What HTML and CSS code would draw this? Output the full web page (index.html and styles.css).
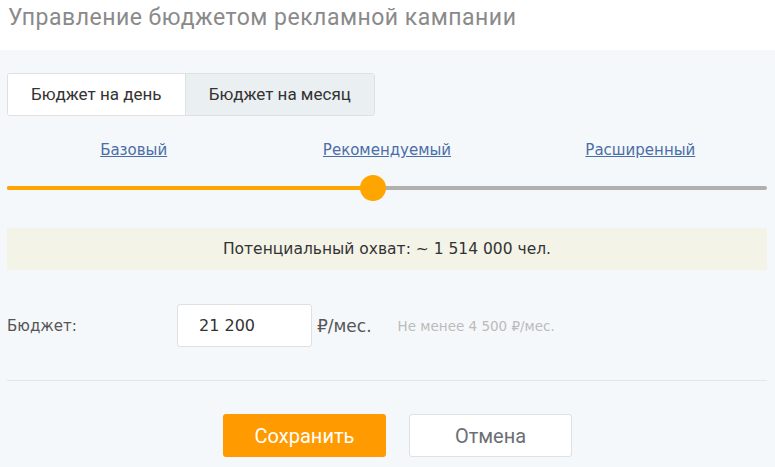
FILE: index.html
```html
<!DOCTYPE html>
<html lang="ru">
<head>
    <meta charset="UTF-8">
    <title>Управление бюджетом рекламной кампании</title>
    <link rel="stylesheet" href="styles.css">
</head>
<body>
    <div class="modal-head">Управление бюджетом рекламной кампании</div>

    <div class="modal-body">
        <div class="period-tabs">
            <div class="period-tab active">Бюджет на день</div>
            <div class="period-tab">Бюджет на месяц</div>
        </div>

        <div class="levels">
            <a href="#" class="level">Базовый</a>
            <a href="#" class="level">Рекомендуемый</a>
            <a href="#" class="level">Расширенный</a>
        </div>

        <div class="slider">
            <div class="slider-track"></div>
            <div class="slider-fill" style="width: 48.2%"></div>
            <div class="slider-thumb" style="left: 48.2%"></div>
        </div>

        <div class="reach">Потенциальный охват: ~ 1 514 000 чел.</div>

        <div class="budget-row">
            <label class="budget-label" for="budget">Бюджет:</label>
            <input class="budget-input" id="budget" type="text" value="21 200">
            <span class="budget-unit">₽/мес.</span>
            <span class="budget-hint">Не менее 4 500 ₽/мес.</span>
        </div>

        <div class="divider"></div>

        <div class="actions">
            <button class="btn btn-save">Сохранить</button>
            <button class="btn btn-cancel">Отмена</button>
        </div>
    </div>
</body>
</html>
```

FILE: styles.css
```css
body {
    margin: 0;
    padding: 0;
    background-color: #f5f8fa;
    font-family: Roboto, "Liberation Sans", Arial, sans-serif;
    overflow: hidden;
}

.modal-head {
    height: 50px;
    box-sizing: border-box;
    padding: 3px 8px 0;
    background-color: #fff;
    color: #8a8a8a;
    font-size: 23px;
    letter-spacing: 0.5px;
    line-height: 30px;
}

.modal-body {
    padding: 23px 8px 0 7px;
}

/* period switch */
.period-tabs {
    display: flex;
    width: 368px;
    border: 1px solid #dde1e4;
    border-radius: 3px;
    overflow: hidden;
    box-sizing: border-box;
}

.period-tab {
    height: 41px;
    line-height: 41px;
    text-align: center;
    font-size: 17px;
    color: #333;
    background-color: #eaeff2;
    flex: 1 1 190px;
}

.period-tab.active {
    background-color: #fff;
    flex-basis: 178px;
    border-right: 1px solid #dde1e4;
}

/* budget levels */
.levels {
    display: grid;
    grid-template-columns: 1fr 1fr 1fr;
    margin-top: 24px;
    line-height: 20px;
}

.level {
    text-align: center;
    font-family: "DejaVu Sans", Verdana, sans-serif;
    font-size: 15px;
    color: #4a6ea8;
    justify-self: center;
}

.slider {
    position: relative;
    height: 26px;
    margin-top: 15px;
}

.slider-track,
.slider-fill {
    position: absolute;
    left: 0;
    top: 11px;
    height: 4px;
    border-radius: 2px;
}

.slider-track {
    right: 0;
    background-color: #b0b0b0;
}

.slider-fill {
    background-color: #ffa500;
}

.slider-thumb {
    position: absolute;
    top: 0;
    width: 26px;
    height: 26px;
    margin-left: -13px;
    border-radius: 50%;
    background-color: #ffa500;
}

.reach {
    margin-top: 27px;
    height: 42px;
    line-height: 42px;
    background-color: #f4f3e8;
    text-align: center;
    font-family: "DejaVu Sans", Verdana, sans-serif;
    font-size: 15.5px;
    color: #333;
}

/* budget input */
.budget-row {
    display: flex;
    align-items: center;
    margin-top: 34px;
    height: 43px;
    font-family: "DejaVu Sans", Verdana, sans-serif;
}

.budget-label {
    width: 170px;
    font-size: 15px;
    color: #555;
}

.budget-input {
    width: 135px;
    height: 43px;
    box-sizing: border-box;
    border: 1px solid #dde1e4;
    border-radius: 3px;
    padding: 0 0 0 21px;
    font-family: "DejaVu Sans", Verdana, sans-serif;
    font-size: 16px;
    color: #333;
    outline: none;
}

.budget-unit {
    margin-left: 5px;
    font-size: 17px;
    color: #555;
}

.budget-hint {
    margin-left: 26px;
    font-size: 13.5px;
    color: #bbb;
}

.divider {
    margin-top: 33px;
    height: 1px;
    background-color: #e3e6e9;
}

.actions {
    display: flex;
    gap: 23px;
    margin-top: 33px;
    padding-left: 216px;
}

.btn {
    width: 163px;
    height: 43px;
    border-radius: 3px;
    font-family: Roboto, "Liberation Sans", Arial, sans-serif;
    font-size: 20px;
    cursor: pointer;
}

.btn-save {
    border: none;
    background-color: #ff9a00;
    color: #fff;
}

.btn-cancel {
    border: 1px solid #dde1e4;
    background-color: #fff;
    color: #6b6f75;
}
```
